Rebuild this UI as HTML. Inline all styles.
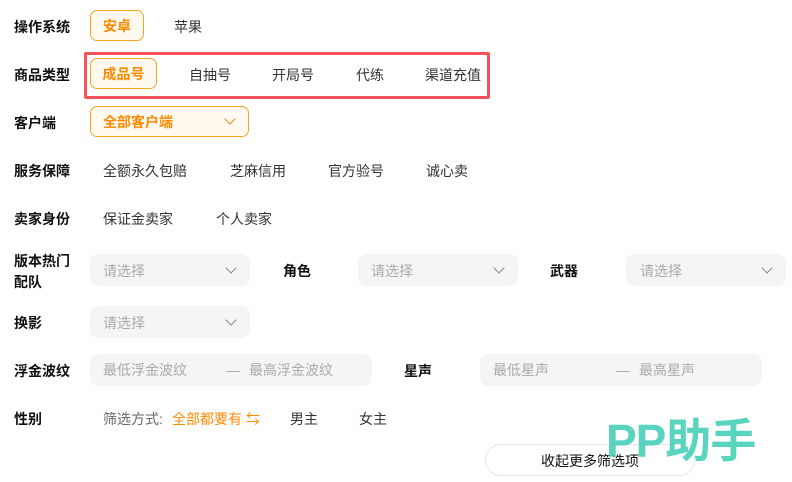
<!DOCTYPE html>
<html><head><meta charset="utf-8"><style>
*{margin:0;padding:0;box-sizing:border-box}
body{width:792px;height:482px;background:#fff;position:relative;overflow:hidden;font-family:"Liberation Sans","Noto Sans CJK SC",sans-serif;font-size:14px;color:#333}
.a{position:absolute;white-space:nowrap;line-height:18px}
.l{font-weight:bold;color:#111}
.sel{position:absolute;border:1px solid #f5a623;background:#fff9f0;border-radius:7px;color:#ff8a00;font-weight:bold;display:flex;align-items:center;justify-content:center}
.box{position:absolute;background:#f5f5f5;border-radius:8px;color:#aaa}
.g{color:#aaa}
.chev{position:absolute;width:8px;height:8px;border-right:1.5px solid #888;border-bottom:1.5px solid #888;transform:rotate(45deg)}
</style></head><body>
<div class="a l" style="left:14px;top:18px">操作系统</div>
<div class="sel" style="left:90px;top:10px;width:54px;height:31px">安卓</div>
<div class="a" style="left:174px;top:18px">苹果</div>

<div style="position:absolute;left:84px;top:52px;width:406px;height:47px;border:3px solid #f5525a;border-radius:2px"></div>
<div class="a l" style="left:14px;top:66px">商品类型</div>
<div class="sel" style="left:90px;top:58px;width:67px;height:31px">成品号</div>
<div class="a" style="left:189px;top:66px">自抽号</div>
<div class="a" style="left:272px;top:66px">开局号</div>
<div class="a" style="left:356px;top:66px">代练</div>
<div class="a" style="left:425px;top:66px">渠道充值</div>

<div class="a l" style="left:14px;top:114px">客户端</div>
<div class="sel" style="left:90px;top:106px;width:159px;height:31px;justify-content:flex-start;padding-left:12px">全部客户端</div>
<div class="chev" style="left:226px;top:115px;border-color:#e08a20"></div>

<div class="a l" style="left:14px;top:162px">服务保障</div>
<div class="a" style="left:103px;top:162px">全额永久包赔</div>
<div class="a" style="left:230px;top:162px">芝麻信用</div>
<div class="a" style="left:328px;top:162px">官方验号</div>
<div class="a" style="left:426px;top:162px">诚心卖</div>

<div class="a l" style="left:14px;top:210px">卖家身份</div>
<div class="a" style="left:103px;top:210px">保证金卖家</div>
<div class="a" style="left:216px;top:210px">个人卖家</div>

<div class="a l" style="left:14px;top:251px;line-height:21px">版本热门<br>配队</div>
<div class="box" style="left:90px;top:254px;width:160px;height:32px"></div>
<div class="a g" style="left:103px;top:262px">请选择</div>
<div class="chev" style="left:227px;top:264px"></div>
<div class="a l" style="left:283px;top:262px">角色</div>
<div class="box" style="left:358px;top:254px;width:160px;height:32px"></div>
<div class="a g" style="left:371px;top:262px">请选择</div>
<div class="chev" style="left:495px;top:264px"></div>
<div class="a l" style="left:550px;top:262px">武器</div>
<div class="box" style="left:626px;top:254px;width:160px;height:32px"></div>
<div class="a g" style="left:640px;top:262px">请选择</div>
<div class="chev" style="left:763px;top:264px"></div>

<div class="a l" style="left:14px;top:314px">换影</div>
<div class="box" style="left:90px;top:306px;width:160px;height:32px"></div>
<div class="a g" style="left:103px;top:314px">请选择</div>
<div class="chev" style="left:227px;top:316px"></div>

<div class="a l" style="left:14px;top:362px">浮金波纹</div>
<div class="box" style="left:90px;top:354px;width:282px;height:32px"></div>
<div class="a g" style="left:103px;top:361px">最低浮金波纹</div>
<div class="a g" style="left:226px;top:361px">—</div>
<div class="a g" style="left:249px;top:361px">最高浮金波纹</div>
<div class="a l" style="left:404px;top:362px">星声</div>
<div class="box" style="left:480px;top:354px;width:282px;height:32px"></div>
<div class="a g" style="left:493px;top:361px">最低星声</div>
<div class="a g" style="left:616px;top:361px">—</div>
<div class="a g" style="left:639px;top:361px">最高星声</div>

<div class="a l" style="left:14px;top:410px">性别</div>
<div class="a" style="left:103px;top:410px;color:#666">筛选方式:</div>
<div class="a" style="left:172px;top:410px;color:#ff8a00">全部都要有 ⇆</div>
<div class="a" style="left:290px;top:410px">男主</div>
<div class="a" style="left:359px;top:410px">女主</div>

<div style="position:absolute;left:485px;top:444px;width:210px;height:32px;border:1px solid #e5e5e5;border-radius:16px;background:#fff"></div>
<div class="a" style="left:541px;top:452px;color:#111">收起更多筛选项</div>
<div class="a" style="left:606px;top:412px;font-size:46px;line-height:58px;font-weight:bold;color:rgba(60,205,180,0.85);letter-spacing:-1px">PP助手</div>
</body></html>
